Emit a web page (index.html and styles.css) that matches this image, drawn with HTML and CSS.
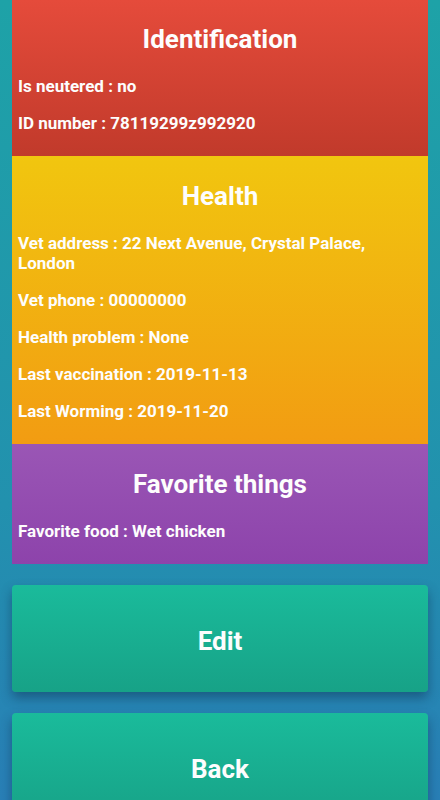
FILE: index.html
```html
<!DOCTYPE html>
<html lang="en">
<head>
    <meta charset="UTF-8">
    <meta name="viewport" content="width=device-width, initial-scale=1.0">
    <title>Pet profile</title>
    <link rel="stylesheet" href="styles.css">
</head>
<body>

<div class="page">
    <!-- Identification -->
    <div class="card card-red card-first">
        <h2>Identification</h2>
        <div class="info">
            <p>Is neutered : no</p>
            <p>ID number : 78119299z992920</p>
        </div>
    </div>

    <!-- Health -->
    <div class="card card-yellow">
        <h2>Health</h2>
        <div class="info">
            <p>Vet address : 22 Next Avenue, Crystal Palace, London</p>
            <p>Vet phone : 00000000</p>
            <p>Health problem : None</p>
            <p>Last vaccination : 2019-11-13</p>
            <p>Last Worming : 2019-11-20</p>
        </div>
    </div>

    <!-- Favorite things -->
    <div class="card card-purple">
        <h2>Favorite things</h2>
        <div class="info">
            <p>Favorite food : Wet chicken</p>
        </div>
    </div>

    <div class="actions">
        <button class="btn">Edit</button>
        <button class="btn">Back</button>
    </div>
</div>

</body>
</html>
```

FILE: styles.css
```css
body {
    margin: 0;
    font-family: Roboto, "Liberation Sans", sans-serif;
    background: linear-gradient(to bottom, #1ea2a7 0%, #2291ae 60%, #2a7db8 100%);
    min-height: 100vh;
    color: #fdfdfd;
}
.page {
    padding: 0 12px 20px;
}
.card {
    padding: 24px 6px 23px;
}
.card-first {
    padding-top: 23px;
}
.card h2 {
    margin: 0 0 21px;
    font-size: 26px;
    line-height: 32px;
    font-weight: 700;
    text-align: center;
}
.info {
    display: flex;
    flex-direction: column;
    gap: 17px;
}
.info p {
    margin: 0;
    font-size: 17px;
    line-height: 20px;
    font-weight: 700;
}
.card-red {
    background: linear-gradient(to bottom, #e54b3b, #c13a2b);
}
.card-yellow {
    background: linear-gradient(to bottom, #f1c60f, #f29c12);
}
.card-purple {
    background: linear-gradient(to bottom, #9a56b5, #8d43ab);
}
.actions {
    display: flex;
    flex-direction: column;
    gap: 21px;
    margin-top: 21px;
}
.btn {
    height: 107px;
    padding: 5px 0 0;
    border: none;
    border-radius: 4px;
    background: linear-gradient(to bottom, #1abb9b, #17a287);
    box-shadow: 0 6px 12px rgba(10, 40, 70, 0.45);
    color: #fdfdfd;
    font-family: Roboto, "Liberation Sans", sans-serif;
    font-size: 26px;
    font-weight: 700;
    cursor: pointer;
}
```
